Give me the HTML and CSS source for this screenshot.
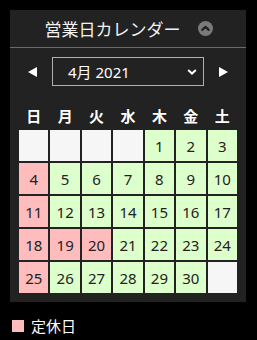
FILE: index.html
```html
<!DOCTYPE html>
<html lang="ja">
  <head>
    <meta charset="UTF-8" />
    <meta name="viewport" content="width=device-width, initial-scale=1.0" />
    <title>営業日カレンダー</title>
    <link rel="stylesheet" href="styles.css">
  </head>
  <body>
    <div class="calendar">
      <div class="calendar-head">
        <span class="calendar-title">営業日カレンダー</span>
        <span class="toggle">
          <svg width="15" height="15" viewBox="0 0 15 15">
            <circle cx="7.5" cy="7.5" r="7.5" fill="#7a7a7a" />
            <path d="M4.3 8.9 L7.5 5.8 L10.7 8.9" fill="none" stroke="#222" stroke-width="2.2" stroke-linecap="round" stroke-linejoin="round" />
          </svg>
        </span>
      </div>

      <div class="calendar-nav">
        <svg class="arrow" width="9" height="10" viewBox="0 0 9 10"><path d="M9 0 L9 10 L0 5 Z" fill="#fff" /></svg>
        <div class="month-select">
          <span>4月 2021</span>
          <svg width="10" height="6" viewBox="0 0 10 6">
            <path d="M1.2 1 L5 4.6 L8.8 1" fill="none" stroke="#fff" stroke-width="2" />
          </svg>
        </div>
        <svg class="arrow" width="9" height="10" viewBox="0 0 9 10"><path d="M0 0 L0 10 L9 5 Z" fill="#fff" /></svg>
      </div>

      <table class="calendar-table">
        <thead>
          <tr id="headerRow"></tr>
        </thead>
        <tbody id="tableBody"></tbody>
      </table>
    </div>

    <div class="legend">
      <span class="legend-box"></span>
      <span>定休日</span>
    </div>

    <script>
      const weekdays = ['日', '月', '火', '水', '木', '金', '土'];
      const holidays = [4, 11, 18, 19, 20, 25];
      const firstDay = 4; // April 1st 2021 is a Thursday
      const daysInMonth = 30;

      document.getElementById('headerRow').innerHTML =
        weekdays.map((d) => `<th>${d}</th>`).join('');

      const tableBody = document.getElementById('tableBody');
      let cells = [];
      for (let i = 0; i < firstDay; i++) cells.push('<td class="day-empty"></td>');
      for (let day = 1; day <= daysInMonth; day++) {
        const cls = holidays.includes(day) ? 'day-off' : 'day-open';
        cells.push(`<td class="${cls}">${day}</td>`);
      }
      while (cells.length % 7 !== 0) cells.push('<td class="day-empty"></td>');

      for (let i = 0; i < cells.length; i += 7) {
        const row = document.createElement('tr');
        row.innerHTML = cells.slice(i, i + 7).join('');
        tableBody.appendChild(row);
      }
    </script>
  </body>
</html>
```

FILE: styles.css
```css
body {
  margin: 10px;
  background-color: #000;
  color: #f0f0f0;
  font-family: "Noto Sans", "Noto Sans CJK JP", sans-serif;
}
.calendar {
  width: 236px;
  background-color: #222;
  padding-bottom: 7px;
}
.calendar-head {
  display: flex;
  justify-content: center;
  align-items: center;
  gap: 17px;
  height: 37px;
  border-bottom: 1px solid #6a6a6a;
  padding-left: 1px;
}
.calendar-title {
  font-family: "Noto Sans CJK JP", sans-serif;
  font-size: 17px;
  line-height: 20px;
  color: #f2f2f2;
}
.toggle {
  display: flex;
  margin-top: -1px;
}
.calendar-nav {
  display: flex;
  justify-content: center;
  align-items: center;
  gap: 15px;
  padding: 9px 0 14px;
}
.month-select {
  display: flex;
  align-items: center;
  justify-content: space-between;
  box-sizing: border-box;
  width: 152px;
  height: 29px;
  border: 1px solid #b0b0b0;
  padding: 0 6px 0 15px;
  font-size: 15px;
  color: #fff;
}
.month-select span {
  line-height: 20px;
}
.calendar-table {
  width: 222px;
  margin: 0 auto;
  border-spacing: 2px;
  table-layout: fixed;

  th {
    height: 26px;
    padding: 0;
    font-size: 15px;
    font-weight: bold;
    color: #fff;
    font-family: "Noto Sans CJK JP", sans-serif;
  }

  td {
    height: 31px;
    padding: 0;
    text-align: center;
    font-size: 15px;
    color: #222;
  }
}
.day-empty {
  background-color: #f6f6f6;
}
.day-open {
  background-color: #ddffcc;
}
.day-off {
  background-color: #ffbcbc;
}
.legend {
  display: flex;
  align-items: center;
  gap: 7px;
  margin-top: 13px;
  padding-left: 2px;
  font-family: "Noto Sans CJK JP", sans-serif;
  font-size: 15px;
  color: #fff;
}
.legend-box {
  width: 12px;
  height: 12px;
  background-color: #ffbcbc;
}
```
